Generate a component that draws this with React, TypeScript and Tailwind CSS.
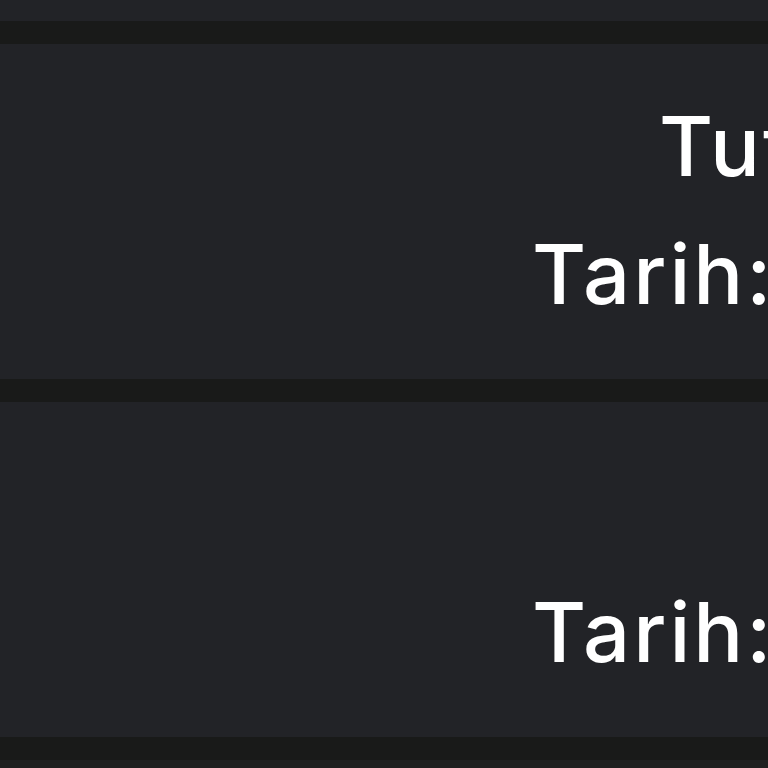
const rows = [
  { top: 'Tutar:', date: 'Tarih:' },
  { top: '', date: 'Tarih:' },
];

export default function App() {
  return (
    <div
      className="w-[768px] h-[768px] overflow-hidden bg-[#191a19] flex flex-col gap-[23px]"
      style={{ fontFamily: 'Inter, "Noto Sans", sans-serif' }}
    >
      <div className="h-[21px] shrink-0 bg-[#222327]" />
      {rows.map((r, i) => (
        <div key={i} className="h-[335px] shrink-0 bg-[#222327] flex flex-col pt-[38px] text-white text-[83px] font-medium tracking-[3px] leading-[128px] whitespace-nowrap">
          <div className="pl-[659px] h-[128px]">{r.top}</div>
          <div className="pl-[532px] h-[128px]">{r.date}</div>
        </div>
      ))}
      <div className="h-[40px] shrink-0 bg-[#202121]" />
    </div>
  );
}
